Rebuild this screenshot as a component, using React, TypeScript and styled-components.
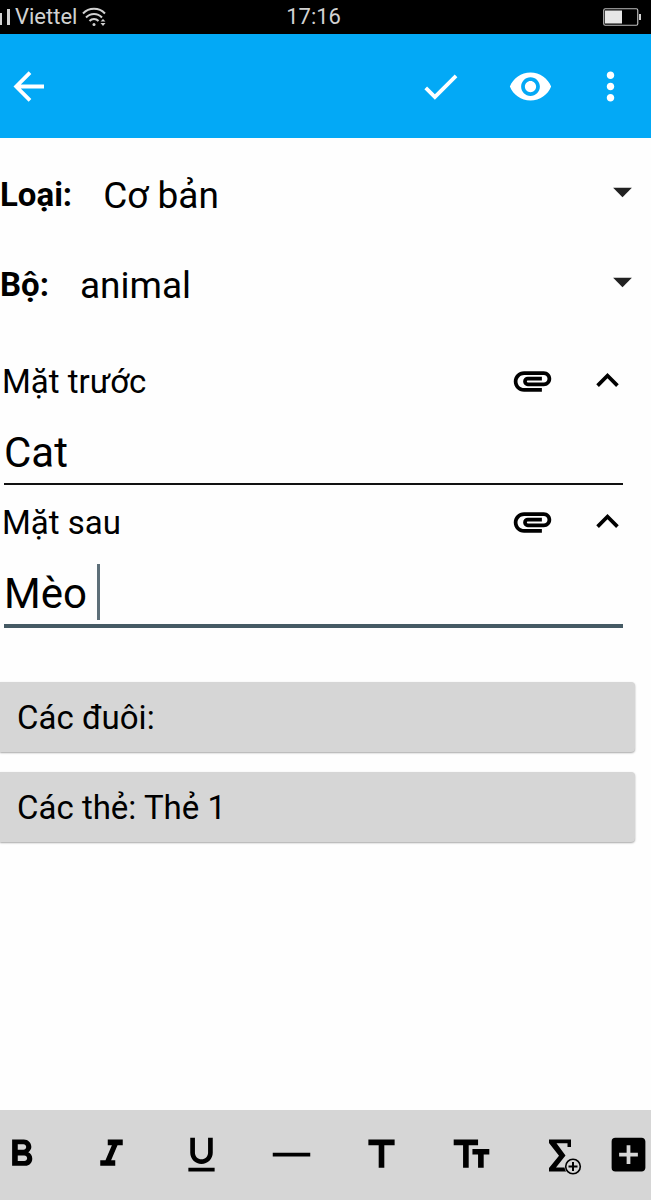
import React, { useState } from "react";
import styled, { createGlobalStyle } from "styled-components";
import {
  MdCheck,
  MdVisibility,
  MdMoreVert,
  MdAttachment,
  MdExpandLess,
  MdArrowDropDown,
  MdFormatBold,
  MdFormatItalic,
  MdFormatUnderlined,
  MdTitle,
  MdAddBox,
} from "react-icons/md";

const GlobalStyle = createGlobalStyle`
  * { box-sizing: border-box; }
  body {
    margin: 0;
    background: #fefefe;
    color: #000;
    font-family: Roboto, "Noto Sans", sans-serif;
  }
  button, input, select { font: inherit; color: inherit; }
  svg { display: block; flex: none; }
`;

const Screen = styled.div`
  display: flex;
  flex-direction: column;
  min-height: 100vh;
`;

const StatusBar = styled.div`
  display: grid;
  grid-template-columns: 12fr auto 13fr;
  align-items: center;
  height: 34px;
  background: #000;
  color: #d2d2d2;
  font-size: 22px;
  line-height: 34px;
`;

const Carrier = styled.div`
  display: flex;
  align-items: center;
  gap: 5px;
`;

const BatterySlot = styled.div`
  display: flex;
  justify-content: flex-end;
  padding-right: 10px;
`;

const AppBar = styled.header`
  display: flex;
  align-items: center;
  height: 104px;
  padding: 0 29px 0 6px;
  background: #03a9f6;
  color: #fff;
`;

const Actions = styled.div`
  display: flex;
  gap: 45px;
  margin-left: auto;
`;

const IconButton = styled.button<{ $width?: number }>`
  display: flex;
  align-items: center;
  justify-content: center;
  flex: none;
  width: ${(p) => p.$width ?? 45}px;
  height: 45px;
  padding: 0;
  border: 0;
  background: none;
  cursor: pointer;
`;

const Form = styled.main`
  flex: 1;
  padding: 11px 0 24px;
`;

const PickerRow = styled.div`
  display: flex;
  align-items: center;
  gap: 31px;
  height: 90px;
  padding-right: 6px;
`;

const PickerLabel = styled.label`
  font-size: 33px;
  font-weight: 700;
`;

const Picker = styled.div`
  display: grid;
  flex: 1;
  align-items: center;

  > * { grid-area: 1 / 1; }
  > svg {
    justify-self: end;
    margin-bottom: 5px;
    pointer-events: none;
    color: #212121;
  }
`;

const PickerSelect = styled.select`
  width: 100%;
  height: 60px;
  padding: 2px 0 0;
  border: 0;
  appearance: none;
  background: none;
  font-size: 37px;
`;

const Fields = styled.div`
  display: grid;
  gap: 6px;
  margin: 21px 28px 54px 0;
`;

const FieldHead = styled.div`
  display: flex;
  align-items: center;
  height: 62px;
  padding-left: 2px;
`;

const FieldLabel = styled.label`
  flex: 1;
  font-size: 33px;
`;

const FieldActions = styled.div`
  display: flex;
  gap: 30px;
  margin-right: -7px;
  padding-bottom: 2px;
`;

const InputWrap = styled.div`
  position: relative;
  margin-left: 4px;
`;

const TextInput = styled.input<{ $active?: boolean }>`
  display: block;
  width: 100%;
  height: ${(p) => (p.$active ? 75 : 73)}px;
  padding: 10px 0 0;
  border: 0;
  border-bottom: ${(p) => (p.$active ? "4px solid #455a64" : "2px solid #111")};
  outline: 0;
  background: none;
  font-size: 42px;
  caret-color: #455a64;
`;

const Caret = styled.span`
  position: absolute;
  top: 11px;
  left: 93px;
  width: 3px;
  height: 56px;
  background: #5d6f79;
`;

const Chips = styled.div`
  display: grid;
  gap: 20px;
  margin-right: 16px;
`;

const WideButton = styled.button`
  height: 70px;
  padding: 0 17px;
  border: 0;
  border-radius: 0 4px 4px 0;
  background: #d6d6d6;
  box-shadow: 0 1px 2px rgba(0, 0, 0, 0.35);
  font-size: 33px;
  text-align: left;
  cursor: pointer;
`;

const FormatBar = styled.footer`
  display: flex;
  align-items: center;
  height: 90px;
  padding-bottom: 2px;
  background: #d6d6d6;
  color: #000;
`;

const FormatTools = styled.div`
  display: flex;
  flex: 1;
  justify-content: space-between;
  padding-right: 23px;
`;

const ICON = 45;

const SignalIcon = () => (
  <svg width="10" height="20" viewBox="0 0 10 20" fill="#d2d2d2" aria-hidden="true">
    <rect x="0" y="6" width="2" height="12" />
    <rect x="7" y="2" width="3" height="16" />
  </svg>
);

const WifiIcon = () => (
  <svg width="24" height="20" viewBox="0 0 24 20" fill="none" stroke="#d2d2d2" strokeWidth="2" aria-hidden="true">
    <path d="M1 6.5C7 .2 17 .2 23 6.5" />
    <path d="M4 10.500C8.500 5.800 15.500 5.800 20 10.500" />
    <path d="M7.500 14C10 11.300 14 11.300 16.500 14" />
    <circle cx="12" cy="17.500" r="1.500" fill="#d2d2d2" stroke="none" />
    <path d="M18.500 14.500l2.500-2.500 2.500 2.500zM18.500 16l2.500 3 2.500-3z" fill="#d2d2d2" stroke="none" />
  </svg>
);

const BatteryIcon = () => (
  <svg width="38" height="18" viewBox="0 0 38 18" aria-hidden="true">
    <rect x="0.750" y="0.750" width="34" height="16.500" rx="1.500" fill="none" stroke="#bdbdbd" strokeWidth="1.200" />
    <rect x="2" y="2.500" width="17" height="13" fill="#e6e6e6" />
    <rect x="36" y="6" width="2" height="6" fill="#d2d2d2" />
  </svg>
);

const BackIcon = () => (
  <svg width={ICON} height={ICON} viewBox="0 0 45 45" fill="none" stroke="currentColor" strokeWidth="3.8" aria-hidden="true">
    <path d="M38 22.500H11M24 8.700L10.200 22.500l13.800 13.800" />
  </svg>
);

const RuleIcon = () => (
  <svg width={ICON} height={ICON} viewBox="0 0 24 24" fill="currentColor" aria-hidden="true">
    <path d="M2 11h20v2H2z" />
  </svg>
);

const TextSizeIcon = () => (
  <svg width={ICON} height={ICON} viewBox="0 0 24 24" fill="currentColor" aria-hidden="true">
    <path d="M2.500 4v3h5v12h3V7h5V4h-13zm19 5h-9v3h3v7h3v-7h3V9z" />
  </svg>
);

const FormulaIcon = () => (
  <svg width={ICON} height={ICON} viewBox="0 0 45 45" aria-hidden="true">
    <path
      d="M10 7.500H32V15H28.500V11.300H17.500L26.500 23.500 17 35.500H27V39.500H10V36L20 23.800 10 11z"
      fill="currentColor"
    />
    <circle cx="34" cy="34.500" r="8.600" fill="#d6d6d6" />
    <circle cx="34" cy="34.500" r="7.300" fill="none" stroke="currentColor" strokeWidth="1.600" />
    <path d="M34 30v9M29.500 34.500h9" stroke="currentColor" strokeWidth="2" />
  </svg>
);

function PickerField({ id, label, options }: { id: string; label: string; options: string[] }) {
  return (
    <PickerRow>
      <PickerLabel htmlFor={id}>{label}</PickerLabel>
      <Picker>
        <PickerSelect id={id}>
          {options.map((o) => (
            <option key={o}>{o}</option>
          ))}
        </PickerSelect>
        <MdArrowDropDown size={ICON} />
      </Picker>
    </PickerRow>
  );
}

function CardField({ id, label, initial, active }: { id: string; label: string; initial: string; active?: boolean }) {
  const [value, setValue] = useState(initial);
  return (
    <div>
      <FieldHead>
        <FieldLabel htmlFor={id}>{label}</FieldLabel>
        <FieldActions>
          <IconButton type="button" aria-label="Đính kèm">
            <MdAttachment size={ICON} />
          </IconButton>
          <IconButton type="button" aria-label="Thu gọn">
            <MdExpandLess size={ICON} />
          </IconButton>
        </FieldActions>
      </FieldHead>
      <InputWrap>
        <TextInput id={id} type="text" $active={active} value={value} onChange={(e) => setValue(e.target.value)} />
        {active && <Caret />}
      </InputWrap>
    </div>
  );
}

const tools = [
  { name: "Đậm", icon: <MdFormatBold size={ICON} /> },
  { name: "Nghiêng", icon: <MdFormatItalic size={ICON} /> },
  { name: "Gạch chân", icon: <MdFormatUnderlined size={ICON} /> },
  { name: "Đường kẻ", icon: <RuleIcon /> },
  { name: "Tiêu đề", icon: <MdTitle size={ICON} /> },
  { name: "Cỡ chữ", icon: <TextSizeIcon /> },
  { name: "Công thức", icon: <FormulaIcon /> },
];

export default function App() {
  return (
    <Screen>
      <GlobalStyle />
      <StatusBar>
        <Carrier>
          <SignalIcon />
          <span>Viettel</span>
          <WifiIcon />
        </Carrier>
        <span>17:16</span>
        <BatterySlot>
          <BatteryIcon />
        </BatterySlot>
      </StatusBar>
      <AppBar>
        <IconButton type="button" aria-label="Quay lại">
          <BackIcon />
        </IconButton>
        <Actions>
          <IconButton type="button" aria-label="Lưu">
            <MdCheck size={ICON} />
          </IconButton>
          <IconButton type="button" aria-label="Xem trước">
            <MdVisibility size={ICON} />
          </IconButton>
          <IconButton type="button" aria-label="Thêm tùy chọn" $width={24}>
            <MdMoreVert size={ICON} />
          </IconButton>
        </Actions>
      </AppBar>
      <Form>
        <PickerField id="type" label="Loại:" options={["Cơ bản"]} />
        <PickerField id="deck" label="Bộ:" options={["animal"]} />
        <Fields>
          <CardField id="front" label="Mặt trước" initial="Cat" />
          <CardField id="back" label="Mặt sau" initial="Mèo " active />
        </Fields>
        <Chips>
          <WideButton type="button">Các đuôi:</WideButton>
          <WideButton type="button">Các thẻ: Thẻ 1</WideButton>
        </Chips>
      </Form>
      <FormatBar>
        <FormatTools>
          {tools.map((t) => (
            <IconButton key={t.name} type="button" aria-label={t.name} $width={42}>
              {t.icon}
            </IconButton>
          ))}
        </FormatTools>
        <IconButton type="button" aria-label="Thêm nút" $width={46}>
          <MdAddBox size={ICON} />
        </IconButton>
      </FormatBar>
    </Screen>
  );
}
